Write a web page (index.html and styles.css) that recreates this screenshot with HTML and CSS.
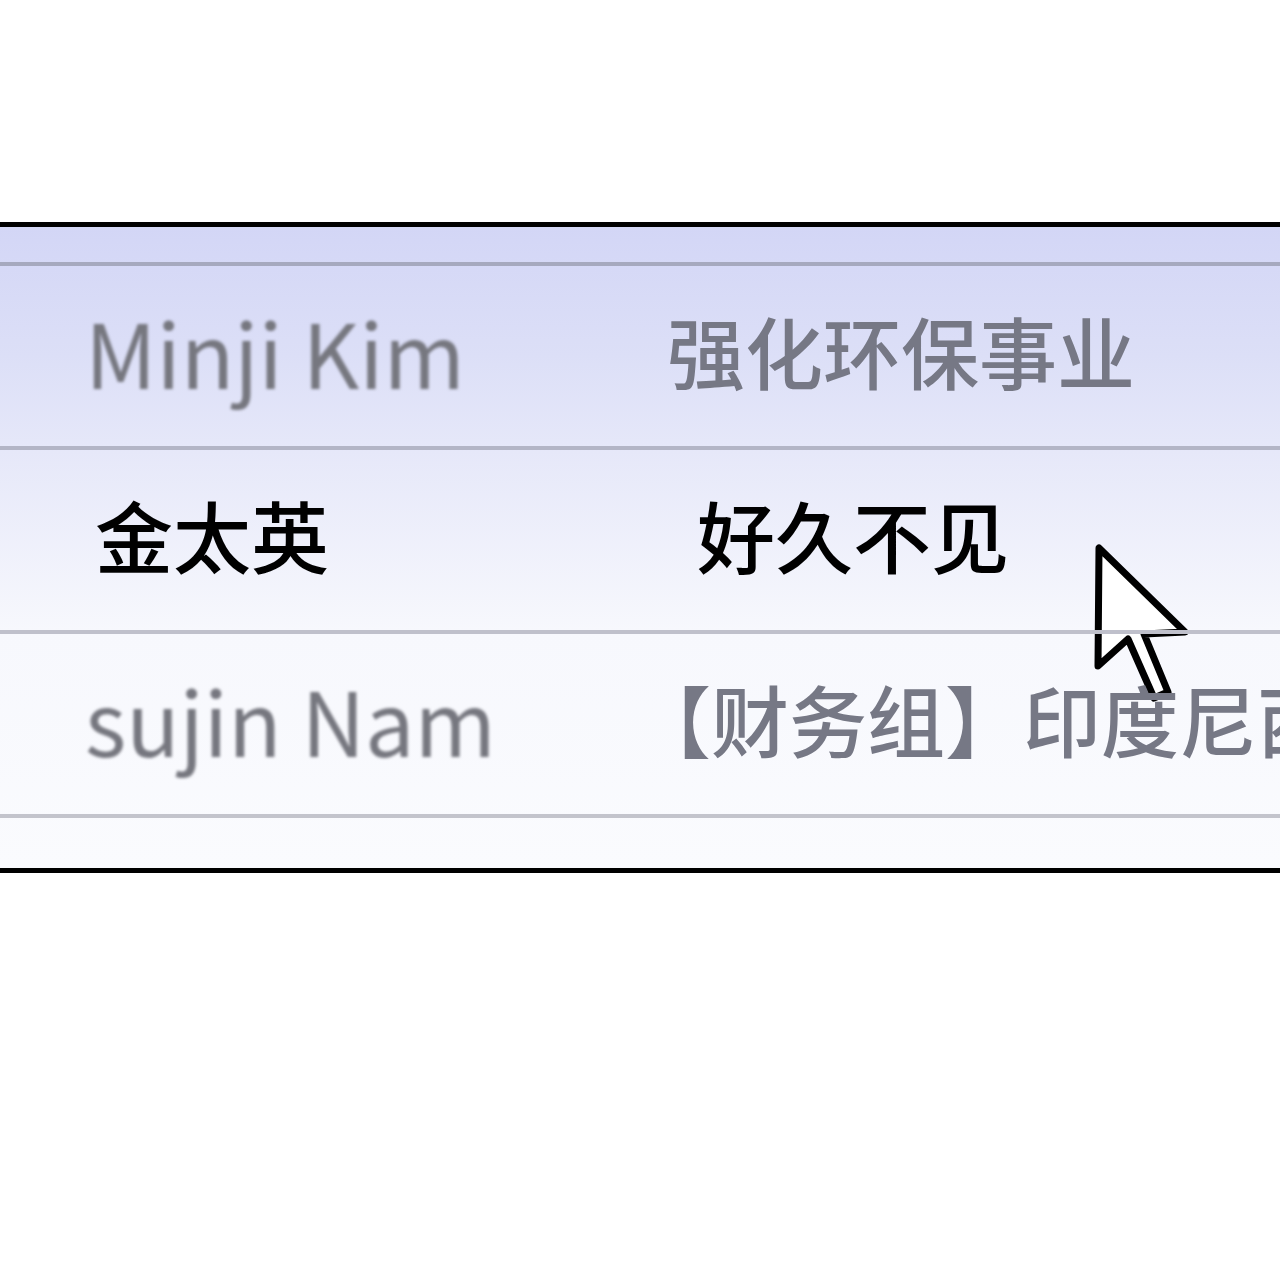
FILE: index.html
```html
<!DOCTYPE html>
<html lang="zh">
<head>
    <meta charset="UTF-8">
    <meta name="viewport" content="width=device-width, initial-scale=1.0">
    <title>Messages</title>
    <link rel="stylesheet" href="styles.css">
</head>
<body>
    <div class="panel">
        <div class="row">
            <div class="name latin">Minji Kim</div>
            <div class="message">强化环保事业</div>
        </div>
        <div class="row active">
            <div class="name">金太英</div>
            <div class="message">好久不见</div>
            <svg class="cursor" xmlns="http://www.w3.org/2000/svg" viewBox="0 0 110 170" width="110" height="170">
                <path d="M11 10 L10 128 L40 101 L66 160 L80 154 L56 96 L97 94 Z"></path>
            </svg>
        </div>
        <div class="row">
            <div class="name latin">sujin Nam</div>
            <div class="message bracketed">【财务组】印度尼西亚项目汇报</div>
        </div>
    </div>
</body>
</html>
```

FILE: styles.css
```css
body {
    margin: 0;
    padding-top: 222px;
    background-color: #fff;
    font-family: "Noto Sans CJK SC", "Noto Sans", sans-serif;
    overflow: hidden;
}

.panel {
    border-top: 5px solid #000;
    border-bottom: 5px solid #000;
    padding: 35px 0 50px;
    background: linear-gradient(180deg, #d3d6f6 0%, #dcdff7 20%, #e6e8f9 35%, #f7f8fd 63%, #fafbfe 100%);
}

.row {
    position: relative;
    display: grid;
    grid-template-columns: 582px 1fr;
    align-items: center;
    height: 180px;
    padding-left: 85px;
    border-top: 4px solid #a6a9be;
    font-size: 78px;
    font-weight: 500;
    line-height: 1.3;
    color: #767885;
    white-space: nowrap;
}

.row:last-child {
    border-bottom: 4px solid #c3c4cc;
    border-top-color: #bfc0cb;
}

.row.active {
    padding-left: 95px;
    grid-template-columns: 602px 1fr;
    color: #000;
    border-top-color: #b3b5c6;
}

.name,
.message {
    margin-top: -10px;
}

.name.latin {
    font-size: 88px;
    font-weight: 400;
    filter: blur(1.4px);
    color: #76777f;
}

.message.bracketed {
    margin-left: -34px;
}

.cursor {
    position: absolute;
    left: 1088px;
    top: 88px;
}

.cursor path {
    fill: #fff;
    stroke: #000;
    stroke-width: 7;
    stroke-linejoin: round;
}
```
